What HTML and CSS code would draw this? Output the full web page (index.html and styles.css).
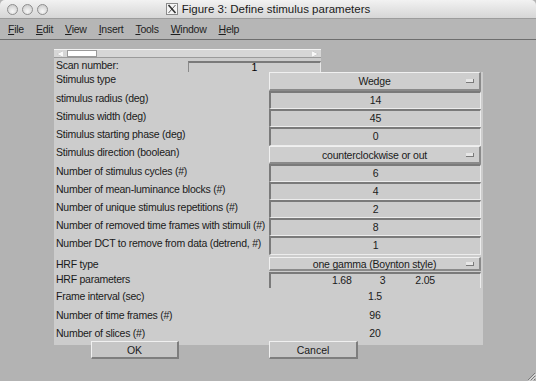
FILE: index.html
```html
<!DOCTYPE html>
<html lang="en">
<head>
    <meta charset="UTF-8">
    <title>Figure 3: Define stimulus parameters</title>
    <link rel="stylesheet" href="styles.css">
</head>
<body>
    <div class="window">
        <div class="titlebar">
            <div class="lights">
                <span class="light"></span>
                <span class="light"></span>
                <span class="light"></span>
            </div>
            <div class="title">
                <svg class="xlogo" width="12" height="12" viewBox="0 0 12 12">
                    <rect x="0.5" y="0.5" width="11" height="11" fill="#f4f4f4" stroke="#8a8a8a"/>
                    <path d="M2.5 2 L9.5 10" stroke="#333" stroke-width="1.6"/>
                    <path d="M9.5 2 L2.5 10" stroke="#333" stroke-width="0.8"/>
                </svg>
                Figure 3: Define stimulus parameters
            </div>
        </div>
        <div class="menubar">
            <span class="menu"><u>F</u>ile</span>
            <span class="menu"><u>E</u>dit</span>
            <span class="menu"><u>V</u>iew</span>
            <span class="menu"><u>I</u>nsert</span>
            <span class="menu"><u>T</u>ools</span>
            <span class="menu"><u>W</u>indow</span>
            <span class="menu"><u>H</u>elp</span>
        </div>
        <div class="canvas">
            <div class="figure">
                <div class="top">
                    <div class="slider">
                        <span class="arrow left"></span>
                        <span class="thumb"></span>
                        <span class="arrow right"></span>
                    </div>
                    <div class="scan-row">
                        <span class="label">Scan number:</span>
                        <div class="scan-box">1</div>
                    </div>
                </div>
                <div class="panel">
                    <div class="row h19"><span class="label">Stimulus type</span><div class="popup">Wedge<i class="knob"></i></div></div>
                    <div class="row h18"><span class="label">stimulus radius (deg)</span><div class="edit">14</div></div>
                    <div class="row h18"><span class="label">Stimulus width (deg)</span><div class="edit">45</div></div>
                    <div class="row h19"><span class="label">Stimulus starting phase (deg)</span><div class="edit">0</div></div>
                    <div class="row h18"><span class="label lift">Stimulus direction (boolean)</span><div class="popup">counterclockwise or out<i class="knob"></i></div></div>
                    <div class="row h18"><span class="label">Number of stimulus cycles (#)</span><div class="edit">6</div></div>
                    <div class="row h18"><span class="label">Number of mean-luminance blocks (#)</span><div class="edit">4</div></div>
                    <div class="row h18"><span class="label">Number of unique stimulus repetitions (#)</span><div class="edit">2</div></div>
                    <div class="row h18"><span class="label">Number of removed time frames with stimuli (#)</span><div class="edit">8</div></div>
                    <div class="row h21"><span class="label">Number DCT to remove from data (detrend, #)</span><div class="edit short">1</div></div>
                    <div class="row h15"><span class="label">HRF type</span><div class="popup small">one gamma (Boynton style)<i class="knob"></i></div></div>
                    <div class="row h17"><span class="label">HRF parameters</span><div class="edit multi"><span>1.68</span><span>3</span><span>2.05</span></div></div>
                    <div class="row h19"><span class="label">Frame interval (sec)</span><div class="text">1.5</div></div>
                    <div class="row h18"><span class="label">Number of time frames (#)</span><div class="text">96</div></div>
                    <div class="row h19"><span class="label">Number of slices (#)</span><div class="text">20</div></div>
                </div>
                <div class="buttons">
                    <button class="btn ok">OK</button>
                    <button class="btn cancel">Cancel</button>
                </div>
            </div>
            <div class="grip">
                <svg width="10" height="10" viewBox="0 0 10 10">
                    <path d="M9 2 L2 9 M9 5 L5 9 M9 8 L8 9" stroke="#7a7a7a" stroke-width="1"/>
                    <path d="M9.8 2.8 L2.8 9.8 M9.8 5.8 L5.8 9.8" stroke="#f4f4f4" stroke-width="1"/>
                </svg>
            </div>
        </div>
    </div>
</body>
</html>
```

FILE: styles.css
```css
body {
    margin: 0;
    padding: 0;
    font-family: "Liberation Sans", Arial, sans-serif;
    background-color: #b3b3b3;
}

.window {
    width: 536px;
    height: 381px;
    display: flex;
    flex-direction: column;
    overflow: hidden;
}

.titlebar {
    height: 18px;
    display: flex;
    align-items: center;
    background: linear-gradient(#f2f2f2, #d6d6d6);
    border-radius: 5px 5px 0 0;
}

.lights {
    display: flex;
    gap: 4px;
    padding-left: 7px;
}

.light {
    width: 11px;
    height: 11px;
    border-radius: 50%;
    background: radial-gradient(circle at 50% 70%, #f8f8f8, #c4c4c4);
    border: 1px solid #8e8e8e;
    box-sizing: border-box;
}

.title {
    flex: 1;
    display: flex;
    align-items: center;
    justify-content: center;
    gap: 4px;
    padding-right: 48px;
    font-size: 11.5px;
    color: #1a1a1a;
}

.menubar {
    height: 20px;
    display: flex;
    align-items: center;
    padding-left: 8px;
    background-color: #b6b6b6;
    border-top: 1px solid #9c9c9c;
    border-bottom: 1px solid #6e6e6e;
    font-size: 10.5px;
    letter-spacing: -0.25px;
    color: #1e1e1e;
}

.menu {
    margin-right: 12px;
}

.canvas {
    flex: 1;
    position: relative;
    padding-top: 9px;
}

.figure {
    margin-left: 54px;
    width: 429px;
}

.top {
    width: 267px;
    background-color: #cccccc;
}

.slider {
    height: 9px;
    box-sizing: border-box;
    background-color: #d6d6d6;
    border-top: 1px solid #f2f2f2;
    border-bottom: 1px solid #9a9a9a;
    display: flex;
    align-items: center;
}

.arrow {
    width: 0;
    height: 0;
    border-top: 3px solid transparent;
    border-bottom: 3px solid transparent;
}

.arrow.left {
    margin-left: 3px;
    border-right: 6px solid #f8f8f8;
    filter: drop-shadow(0 0 0.5px #777);
}

.arrow.right {
    margin-left: auto;
    margin-right: 3px;
    border-left: 6px solid #f8f8f8;
    filter: drop-shadow(0 0 0.5px #777);
}

.thumb {
    width: 30px;
    height: 7px;
    margin-left: 4px;
    background-color: #ffffff;
    border: 1px solid #9a9a9a;
    box-sizing: border-box;
}

.scan-row {
    display: flex;
    height: 14px;
}

.scan-row .label {
    width: 134px;
    padding-left: 2px;
    padding-top: 2px;
    line-height: 11px;
    box-sizing: border-box;
}

.scan-box {
    flex: 1;
    height: 11px;
    margin-top: 3px;
    box-sizing: border-box;
    border-top: 2px solid #7a7a7a;
    border-left: 1px solid #8a8a8a;
    border-right: 1px solid #e8e8e8;
    font-size: 10.5px;
    line-height: 9px;
    text-align: center;
}

.panel {
    background-color: #cccccc;
    height: 273px;
    display: flex;
    flex-direction: column;
}

.label {
    font-size: 10.5px;
    letter-spacing: -0.25px;
    color: #1a1a1a;
    line-height: 12px;
    white-space: nowrap;
}

.row {
    display: flex;
}

.row .label {
    width: 215px;
    padding-left: 2px;
    padding-top: 1px;
    box-sizing: border-box;
}

.row .label.lift {
    margin-top: -1px;
}

.h15 { height: 15px; }
.h17 { height: 17px; }
.h18 { height: 18px; }
.h19 { height: 19px; }
.h21 { height: 21px; }

.edit,
.popup,
.text {
    width: 212px;
    box-sizing: border-box;
    font-size: 10.5px;
    letter-spacing: -0.2px;
    color: #1a1a1a;
    display: flex;
    align-items: center;
    justify-content: center;
    position: relative;
    white-space: nowrap;
}

.edit {
    border-top: 2px solid #7a7a7a;
    border-left: 2px solid #7a7a7a;
    border-right: 1px solid #ececec;
    border-bottom: 1px solid #ececec;
    padding-bottom: 2px;
}

.edit.short {
    height: 19px;
}

.edit.multi {
    height: 16px;
    border-bottom: none;
    justify-content: flex-start;
    align-items: flex-start;
    padding: 1px 0 0 0;
    line-height: 11px;
}

.edit.multi span:nth-child(1) { margin-left: 61px; }
.edit.multi span:nth-child(2) { margin-left: 28px; }
.edit.multi span:nth-child(3) { margin-left: 30px; }

.popup {
    border-top: 1px solid #f0f0f0;
    border-left: 1px solid #f0f0f0;
    border-right: 2px solid #8a8a8a;
    border-bottom: 2px solid #8a8a8a;
    background-color: #cecece;
}

.popup.small {
    height: 14px;
}

.knob {
    position: absolute;
    right: 5px;
    top: 50%;
    margin-top: -2px;
    width: 8px;
    height: 4px;
    background-color: #e6e6e6;
    border-bottom: 1px solid #7a7a7a;
    border-right: 1px solid #7a7a7a;
    box-sizing: border-box;
}

.text {
    align-items: flex-start;
    padding-top: 1px;
    line-height: 12px;
}

.buttons {
    display: flex;
    margin-top: -4px;
}

.btn {
    height: 18px;
    font-family: "Liberation Sans", Arial, sans-serif;
    font-size: 10.5px;
    color: #1a1a1a;
    background-color: #c6c6c6;
    border-top: 1px solid #f0f0f0;
    border-left: 1px solid #f0f0f0;
    border-right: 2px solid #7e7e7e;
    border-bottom: 2px solid #7e7e7e;
    padding: 0;
    line-height: 14px;
}

.btn.ok {
    width: 88px;
    margin-left: 37px;
}

.btn.cancel {
    width: 89px;
    margin-left: 90px;
}

.grip {
    position: absolute;
    right: 0;
    bottom: 0;
    width: 10px;
    height: 10px;
    line-height: 0;
}
```
